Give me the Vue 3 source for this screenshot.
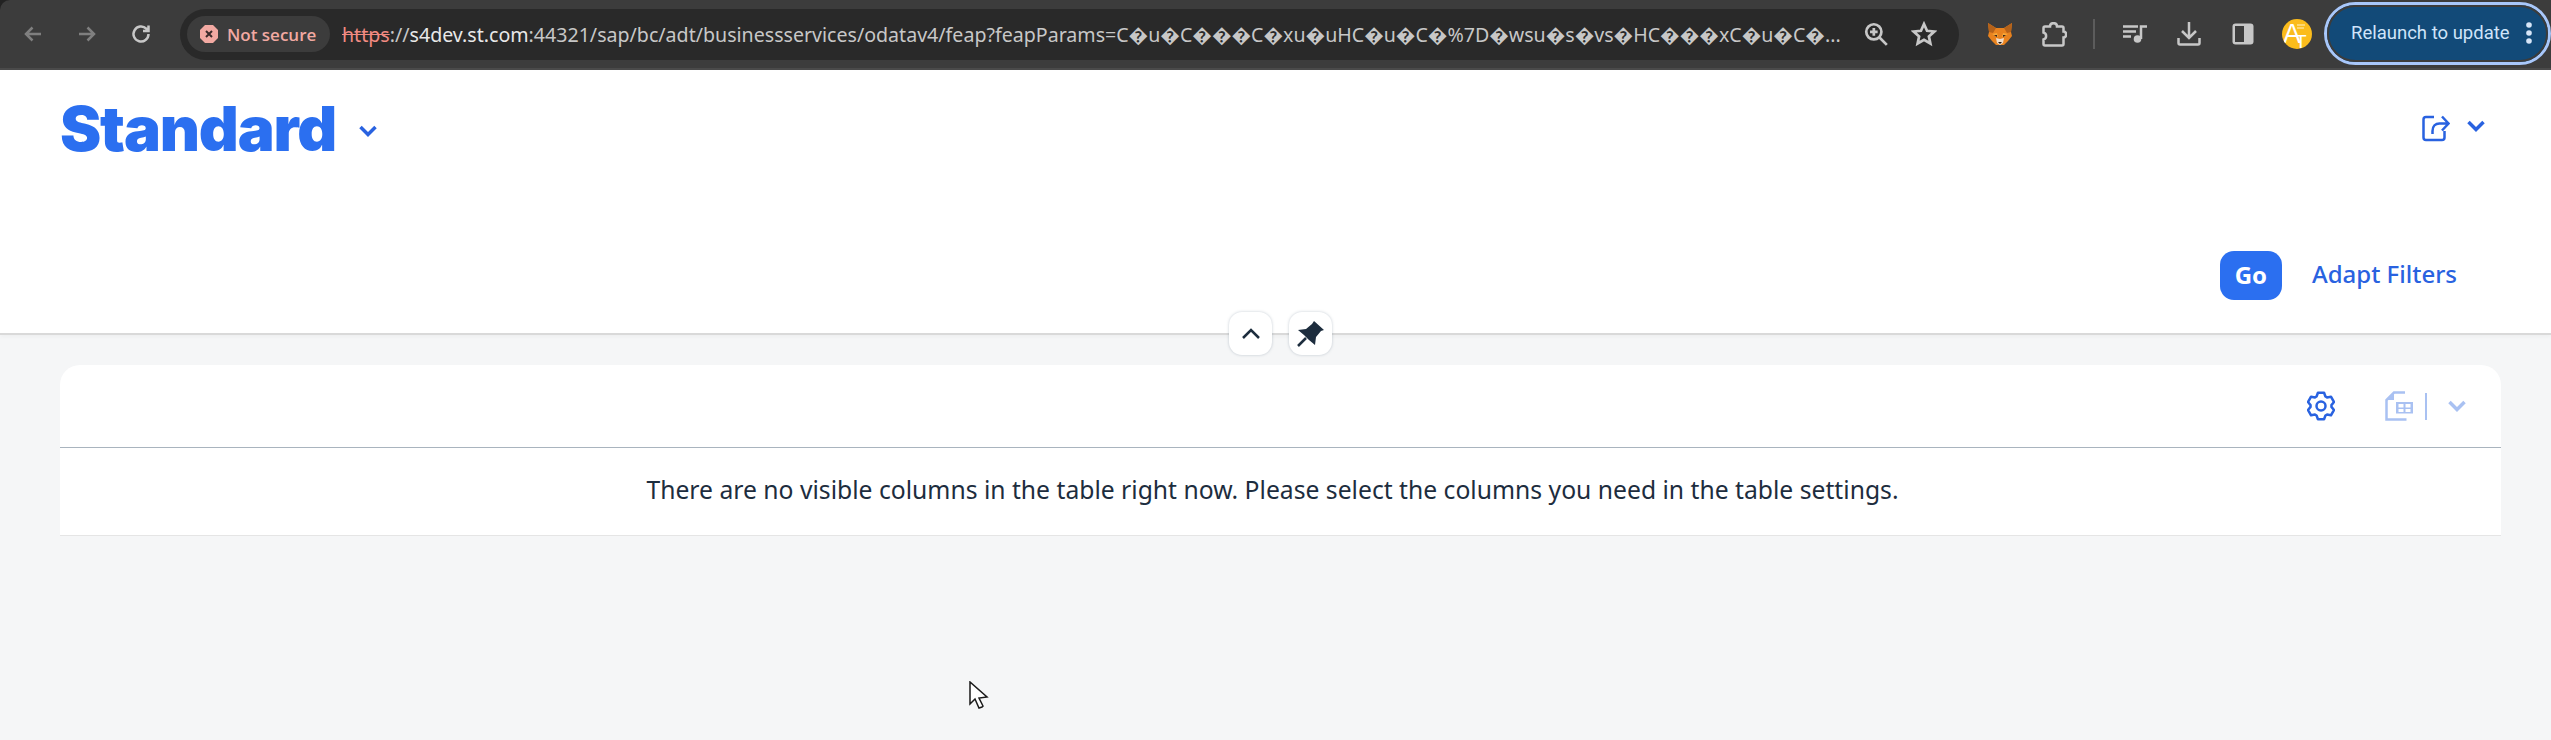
<template>
  <div class="window">
    <div class="toolbar">
      <div class="nav">
        <button class="nav-btn">
          <svg viewBox="0 0 24 24" width="24" height="24"><path d="M20 12H5M11.5 5.500 5 12l6.500 6.500" class="stroke dim" /></svg>
        </button>
        <button class="nav-btn">
          <svg viewBox="0 0 24 24" width="24" height="24"><path d="M4 12h15M12.500 5.500 19 12l-6.500 6.500" class="stroke dim" /></svg>
        </button>
        <button class="nav-btn">
          <svg viewBox="0 0 24 24" width="24" height="24"><path d="M19.500 12a7.500 7.500 0 1 1-2.200-5.300L19.500 9M19.500 3.500V9H14" class="stroke light" /></svg>
        </button>
      </div>
      <div class="omnibox">
        <div class="chip">
          <svg viewBox="0 0 20 20" width="20" height="20"><path d="M6 1h8l5 5v8l-5 5H6l-5-5V6z" fill="#f2a9a2" /><path d="m7 7 6 6m0-6-6 6" stroke="#3a2a2a" stroke-width="2" /></svg>
          <span>Not secure</span>
        </div>
        <div class="url"><s class="scheme">https</s><span class="dim-url">://</span><span class="host">s4dev.st.com</span><span class="dim-url">:44321/sap/bc/adt/businessservices/odatav4/feap?feapParams=C�u�C���C�xu�uHC�u�C�%7D�wsu�s�vs�HC���xC�u�C�...</span></div>
        <svg class="omni-icon" viewBox="0 0 24 24" width="26" height="26"><circle cx="10" cy="10" r="7" class="stroke light" /><path d="M10 6.500v7M6.500 10h7M15 15l7 7" class="stroke light" /></svg>
        <svg class="omni-icon" viewBox="0 0 24 24" width="26" height="26"><path d="m12 2.800 2.800 6.200 6.700.7-5 4.500 1.400 6.600-5.900-3.400-5.900 3.400 1.400-6.600-5-4.500 6.700-.7z" class="stroke light" /></svg>
      </div>
      <div class="tools">
        <button class="tool">
          <svg viewBox="0 0 24 22" width="24" height="22">
            <path d="M0 0 8 5h8l8-5-1 9 1 4-4 5-4 4H8l-4-4-4-5 1-4z" fill="#e8821e" />
            <path d="M0 0 8 5 5 10 1 9zM24 0l-8 5 3 5 4-1z" fill="#b5621a" />
            <path d="M4 11 9 10l1 4zM20 11l-5-1-1 4z" fill="#f6a83a" />
            <path d="M6 12l3 0 0 2zM18 12l-3 0 0 2z" fill="#33281f" />
            <path d="m8 15 4 1 4-1-1 5-3 2-3-2z" fill="#efdcc8" />
            <path d="M10 19h4l-2 2z" fill="#1d1510" />
          </svg>
        </button>
        <button class="tool">
          <svg viewBox="0 0 25 25" width="25" height="25"><path d="M3 4.500h5c0-4.500 7-4.500 7 0h5c1 0 1.500.5 1.500 1.500v3.500c3.500 0 3.500 6 0 6V22c0 1-.5 1.500-1.500 1.500H3c-1 0-1.500-.5-1.500-1.500v-4.500c3.500-1 3.500-6 0-7V6c0-1 .5-1.500 1.500-1.500z" class="stroke light" /></svg>
        </button>
        <span class="tool-sep"></span>
        <button class="tool">
          <svg viewBox="0 0 24 18" width="24" height="18"><path d="M0 1.500h15M0 6.500h13M0 11.500h8" class="stroke light" /><path d="M18 14V1.500h6" class="stroke light" /><circle cx="14.500" cy="14" r="3.800" fill="#c7c7c7" /></svg>
        </button>
        <button class="tool">
          <svg viewBox="0 0 24 24" width="24" height="24"><path d="M12 0v15M5 9l7 7 7-7M1.500 16v5c0 1 .5 1.500 1.500 1.500h18c1 0 1.500-.5 1.500-1.500v-5" class="stroke light" /></svg>
        </button>
        <button class="tool">
          <svg viewBox="0 0 22 22" width="22" height="22"><rect x="0.500" y="0.500" width="21" height="21" rx="3" fill="#c7c7c7" /><rect x="3" y="3" width="9" height="16" fill="#3c3c3c" /></svg>
        </button>
        <div class="avatar">
          <svg viewBox="0 0 30 30" width="30" height="30">
            <defs><clipPath id="avatar-clip"><circle cx="15" cy="15" r="15" /></clipPath></defs>
            <circle cx="15" cy="15" r="15" fill="#fbbc1c" />
            <g clip-path="url(#avatar-clip)">
              <text x="1" y="24" class="avatar-a">A</text>
              <text x="13" y="29" class="avatar-t">T</text>
              <path d="M15 6h8M15 9h7" stroke="#fff3c8" stroke-width="1" />
            </g>
          </svg>
        </div>
      </div>
      <div class="relaunch">
        <span>Relaunch to update</span>
        <svg viewBox="0 0 6 22" width="6" height="22"><circle cx="3" cy="3" r="2.800" /><circle cx="3" cy="11" r="2.800" /><circle cx="3" cy="19" r="2.800" /></svg>
      </div>
    </div>

    <div class="page">
      <header class="head">
        <div class="title-row">
          <div class="title-wrap">
            <h1>Standard</h1>
            <svg class="chev" viewBox="0 0 18 12" width="18" height="12"><path d="m1.500 2 7.500 7.500L16.500 2" /></svg>
          </div>
          <div class="share">
            <svg viewBox="0 0 28 28" width="28" height="28"><path d="M12 3H4c-1.500 0-2.500 1-2.500 2.500v18C1.500 25 2.500 26 4 26h16c1.500 0 2.500-1 2.500-2.500V17" class="stroke blue" /><path d="M10.500 20v-3c0-5 3-7.500 7-7.500h8M20 2.500l6.500 7-6.500 7" class="stroke blue" /></svg>
            <svg class="chev" viewBox="0 0 18 12" width="18" height="12"><path d="m1.500 2 7.500 7.500L16.500 2" /></svg>
          </div>
        </div>
        <div class="filter-row">
          <button class="go">Go</button>
          <button class="adapt">Adapt Filters</button>
        </div>
        <div class="pin-group">
          <button class="round">
            <svg viewBox="0 0 20 12" width="20" height="12"><path d="m2 10 8-8 8 8" fill="none" stroke="#1d2d3e" stroke-width="2.500" /></svg>
          </button>
          <button class="round">
            <svg viewBox="0 0 28 28" width="28" height="28"><path d="M17 1l10 9-3 1-5 6-1 8-6-5-5-5-6-5 8-1 6-5z" fill="#1d2d3e" /><path d="M9 18 1 26" stroke="#1d2d3e" stroke-width="2.500" /></svg>
          </button>
        </div>
      </header>

      <section class="card">
        <div class="card-bar">
          <svg class="gear" viewBox="0 0 28 30" width="28" height="30">
            <path :d="gearPath" class="stroke blue round-join" />
            <circle cx="14" cy="15" r="4.500" class="stroke blue" />
          </svg>
          <div class="variant">
            <svg viewBox="0 0 28 30" width="28" height="30">
              <path d="M20 1.500H9L1.500 9v19.500h20" class="stroke pale" />
              <path d="M9 1.500V9H1.500z" fill="#a9c1f2" />
              <path d="M11 11h17v11.500H11z" fill="#a9c1f2" />
              <path d="M13.500 13h5v3.500h-5zM20.500 13h5v3.500h-5zM13.500 18h5v3h-5zM20.500 18h5v3h-5z" fill="#fff" />
            </svg>
            <span class="variant-sep"></span>
            <svg class="chev chev-pale" viewBox="0 0 18 12" width="18" height="12"><path d="m1.500 2 7.500 7.500L16.500 2" /></svg>
          </div>
        </div>
        <div class="card-empty">There are no visible columns in the table right now. Please select the columns you need in the table settings.</div>
      </section>

      <svg class="cursor" viewBox="0 0 20 28" width="20" height="28"><path d="M1 1v22l5-5 4 9 3-1 1-1-4-8 8-1z" fill="#fff" stroke="#1a1a1a" stroke-width="1.500" /></svg>
    </div>
  </div>
</template>

<script setup>
// six-tooth cog, built from alternating radii around the centre
const rad = (deg) => (deg * Math.PI) / 180
const gearPoint = (r, deg) => `${(14 + r * Math.cos(rad(deg))).toFixed(2)} ${(15 + r * Math.sin(rad(deg))).toFixed(2)}`
const gearPath = 'M' + [-90, -30, 30, 90, 150, 210]
  .flatMap((a) => [gearPoint(10.5, a - 25), gearPoint(13.6, a - 13), gearPoint(13.6, a + 13), gearPoint(10.5, a + 25)])
  .join('L') + 'Z'
</script>

<style>
body {
  background: #f5f6f7;
}
</style>

<style scoped>
.window {
  width: 2551px;
  height: 740px;
  overflow: hidden;
  background: #222;
  font-family: "Noto Sans", "Liberation Sans", sans-serif;
}
button {
  border: 0;
  background: none;
  padding: 0;
  font-family: inherit;
}
.stroke {
  fill: none;
  stroke-width: 2.5;
}
.round-join {
  stroke-linejoin: round;
}
.dim {
  stroke: #7f7f7f;
}
.light {
  stroke: #c7c7c7;
}
.blue {
  stroke: #2962e0;
}
.pale {
  stroke: #a9c1f2;
}

.toolbar {
  height: 70px;
  box-sizing: border-box;
  border-bottom: 2px solid #4a4a4a;
  border-top-left-radius: 10px;
  background: #3c3c3c;
  display: flex;
  align-items: center;
  overflow: hidden;
  font-family: "Open Sans", "DejaVu Sans", sans-serif;
}
.nav {
  display: flex;
  margin-left: 6px;
  width: 174px;
  flex: none;
}
.nav-btn {
  width: 54px;
  height: 40px;
  display: flex;
  align-items: center;
  justify-content: center;
}
.omnibox {
  width: 1779px;
  height: 51px;
  flex: none;
  box-sizing: border-box;
  padding: 0 20px 0 7px;
  border-radius: 26px;
  background: #292929;
  display: flex;
  align-items: center;
}
.chip {
  width: 143px;
  height: 36px;
  flex: none;
  box-sizing: border-box;
  padding-left: 12px;
  border-radius: 18px;
  background: #3c3c3c;
  color: #f2a9a2;
  font-size: 17px;
  font-weight: 600;
  display: flex;
  align-items: center;
  gap: 8px;
}
.url {
  margin-left: 12px;
  width: 1502px;
  flex: none;
  white-space: nowrap;
  font-size: 19.6px;
  color: #c7c7c7;
  font-family: "Noto Sans", "DejaVu Sans", sans-serif;
}
.scheme {
  color: #f28b82;
}
.host {
  color: #e8e8e8;
}
.omni-icon {
  flex: none;
  margin-left: 19px;
}
.omni-icon + .omni-icon {
  margin-left: 22px;
}
.tools {
  display: flex;
  align-items: center;
  flex: none;
  width: 365px;
}
.tool {
  width: 54px;
  height: 40px;
  flex: none;
  display: flex;
  align-items: center;
  justify-content: center;
}
.tools .tool:first-child {
  margin-left: 14px;
}
.tool-sep {
  width: 2px;
  height: 30px;
  margin: 0 13px 0 12px;
  background: #5c5c5c;
  flex: none;
}
.avatar {
  flex: none;
  width: 30px;
  height: 30px;
  margin-left: 12px;
}
.avatar svg {
  display: block;
}
.avatar-a {
  font-family: "Liberation Sans", sans-serif;
  font-size: 27px;
  fill: #fff;
}
.avatar-t {
  font-family: "Liberation Sans", sans-serif;
  font-size: 19px;
  fill: #fff;
}
.relaunch {
  flex: none;
  width: 227px;
  height: 63px;
  box-sizing: border-box;
  border: 3px solid #a8c7fa;
  outline: 2px solid #3c3c3c;
  outline-offset: -5px;
  border-radius: 32px;
  background: #124a78;
  color: #cfe4fa;
  font-family: Roboto, sans-serif;
  font-size: 18.5px;
  padding-left: 24px;
  display: flex;
  align-items: center;
  gap: 16px;
  position: relative;
  top: -1px;
}
.relaunch svg {
  fill: #d7e6f8;
  flex: none;
}

.page {
  height: 670px;
  background: #f5f6f7;
  position: relative;
}
.head {
  height: 265px;
  box-sizing: border-box;
  background: #fff;
  border-bottom: 2px solid #d9d9d9;
  box-shadow: 0 2px 4px rgba(0, 0, 0, 0.03);
  padding: 0 42px 0 60px;
  position: relative;
  display: flex;
  flex-direction: column;
}
.title-row {
  display: flex;
  justify-content: space-between;
  align-items: flex-start;
  padding-top: 24px;
}
.title-wrap {
  display: flex;
  align-items: center;
  gap: 23px;
}
h1 {
  margin: 0;
  font-family: Inter, "Liberation Sans", sans-serif;
  font-size: 62px;
  font-weight: 900;
  letter-spacing: -1.2px;
  line-height: 70px;
  color: #2b6ff0;
}
.chev {
  flex: none;
}
.chev path {
  fill: none;
  stroke: #2962e0;
  stroke-width: 3.5;
}
.chev-pale path {
  stroke: #a9c1f2;
}
.title-wrap .chev {
  margin-top: 4px;
}
.share {
  display: flex;
  align-items: center;
  gap: 17px;
  margin-top: 20px;
  margin-right: 24px;
}
.share .chev {
  margin-top: -4px;
}
.filter-row {
  margin-top: 87px;
  margin-right: 52px;
  align-self: flex-end;
  display: flex;
  align-items: center;
  gap: 30px;
}
.go {
  width: 62px;
  height: 49px;
  padding-bottom: 2px;
  border-radius: 14px;
  background: #2b6ff0;
  color: #fff;
  font-size: 24px;
  font-weight: 700;
}
.adapt {
  padding-bottom: 4px;
  color: #2962e0;
  font-size: 24px;
  font-weight: 500;
}
.pin-group {
  position: absolute;
  top: 242px;
  left: 1229px;
  display: flex;
  gap: 17px;
}
.round {
  width: 43px;
  height: 43px;
  border-radius: 13px;
  background: #fff;
  box-shadow: 0 0 3px rgba(85, 107, 130, 0.35);
  display: flex;
  align-items: center;
  justify-content: center;
}

.card {
  margin: 30px 50px 0 60px;
  background: #fff;
  border-radius: 20px 20px 0 0;
  border-bottom: 1px solid #e5e5e5;
}
.card-bar {
  height: 83px;
  box-sizing: border-box;
  border-bottom: 1px solid #a9b4be;
  padding-right: 35px;
  display: flex;
  align-items: center;
  justify-content: flex-end;
}
.gear {
  margin-right: 50px;
}
.variant {
  display: flex;
  align-items: center;
}
.variant-sep {
  width: 2px;
  height: 27px;
  margin: 0 21px 0 12px;
  background: #a9c1f2;
}
.card-empty {
  height: 87px;
  box-sizing: border-box;
  padding: 0 16px 4px 0;
  display: flex;
  align-items: center;
  justify-content: center;
  font-size: 24.7px;
  color: #1d2d3e;
}
.cursor {
  position: absolute;
  left: 969px;
  top: 611px;
}
</style>
